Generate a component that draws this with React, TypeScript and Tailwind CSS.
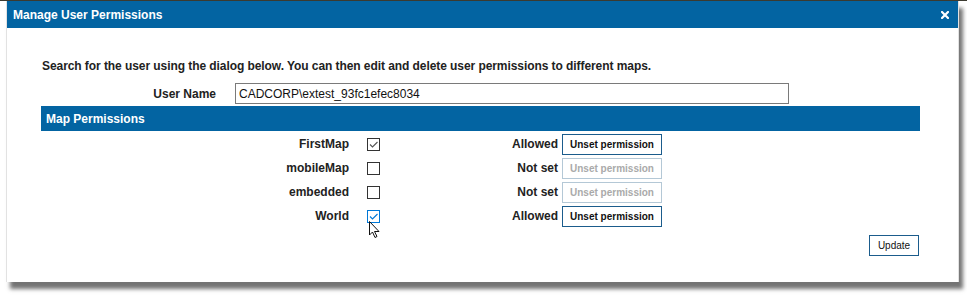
const rows = [
  { name: "FirstMap", checked: true, status: "Allowed", active: true, focus: false },
  { name: "mobileMap", checked: false, status: "Not set", active: false, focus: false },
  { name: "embedded", checked: false, status: "Not set", active: false, focus: false },
  { name: "World", checked: true, status: "Allowed", active: true, focus: true },
];

const Check: React.FC<{ checked: boolean; focus: boolean }> = ({ checked, focus }) => (
  <div
    className={`relative w-[13px] h-[13px] border bg-white ${focus ? "border-[#0078d7]" : "border-[#333]"}`}
  >
    {checked && (
      <svg viewBox="0 0 11 11" className="absolute inset-0 w-[11px] h-[11px]">
        <path
          d="M2 5.5 L4.5 8 L9.5 3"
          fill="none"
          stroke={focus ? "#0078d7" : "#555"}
          strokeWidth="1.1"
        />
      </svg>
    )}
  </div>
);

const App: React.FC = () => {
  return (
    <div className="relative w-[967px] h-[297px] bg-white font-['Liberation_Sans',Arial,sans-serif] text-[#222] overflow-hidden">
      <div className="h-px bg-[#3b3a30]" />
      <div className="ml-[6px] w-[953px] border-x border-[#e2e2e2] bg-white shadow-[4px_7px_4px_rgba(0,0,0,0.55)]">
        <div className="h-[27px] bg-[#0364a2] flex items-center justify-between pl-[6px] pr-[9px]">
          <span className="text-white text-[12px] font-bold">Manage User Permissions</span>
          <svg viewBox="0 0 8 8" className="w-[8px] h-[8px]">
            <path d="M1 1 L7 7 M7 1 L1 7" stroke="white" strokeWidth="2.2" strokeLinecap="square" />
          </svg>
        </div>
        <div className="pl-[34px] pr-[38px] pt-[31px] pb-[26px] flex flex-col">
          <p className="pl-px text-[12px] font-bold leading-[14px] tracking-[-0.07px] text-[#222]">
            Search for the user using the dialog below. You can then edit and delete user permissions to different maps.
          </p>
          <div className="mt-[10px] flex items-center">
            <div className="w-[175px] text-right text-[12px] font-bold">User Name</div>
            <input
              readOnly
              value="CADCORP\extest_93fc1efec8034"
              className="ml-[19px] w-[554px] h-[21px] border border-[#7a7a7a] px-[3px] text-[12px] text-[#111] outline-none"
            />
          </div>
          <div className="mt-[2px] h-[25px] bg-[#0364a2] flex items-center pl-[5px]">
            <span className="text-white text-[12px] font-bold">Map Permissions</span>
          </div>
          <div className="pt-px">
            {rows.map((r) => (
              <div key={r.name} className="h-[24px] flex items-center">
                <div className="w-[308px] text-right text-[12px] font-bold">{r.name}</div>
                <div className="ml-[18px]">
                  <Check checked={r.checked} focus={r.focus} />
                </div>
                <div className="w-[178px] text-right text-[12px] font-bold">{r.status}</div>
                <button
                  className={`ml-[4px] w-[100px] h-[21px] border bg-white text-[10px] font-bold ${
                    r.active ? "border-[#1b5c8c] text-[#111]" : "border-[#b4c8d6] text-[#aaa]"
                  }`}
                >
                  Unset permission
                </button>
              </div>
            ))}
          </div>
          <div className="mt-[7px] flex justify-end pr-px">
            <button className="w-[50px] h-[21px] border border-[#1b5c8c] bg-white text-[10px] text-[#111]">
              Update
            </button>
          </div>
        </div>
      </div>
      <svg viewBox="0 0 12 18" className="absolute left-[369px] top-[221px] w-[12px] h-[18px]">
        <path d="M0.5 0.5 L0.5 14 L3.5 11 L6 16.5 L8 15.5 L5.5 10.5 L10 10.5 Z" fill="white" stroke="#111" strokeWidth="1" />
      </svg>
    </div>
  );
};

export default App;
